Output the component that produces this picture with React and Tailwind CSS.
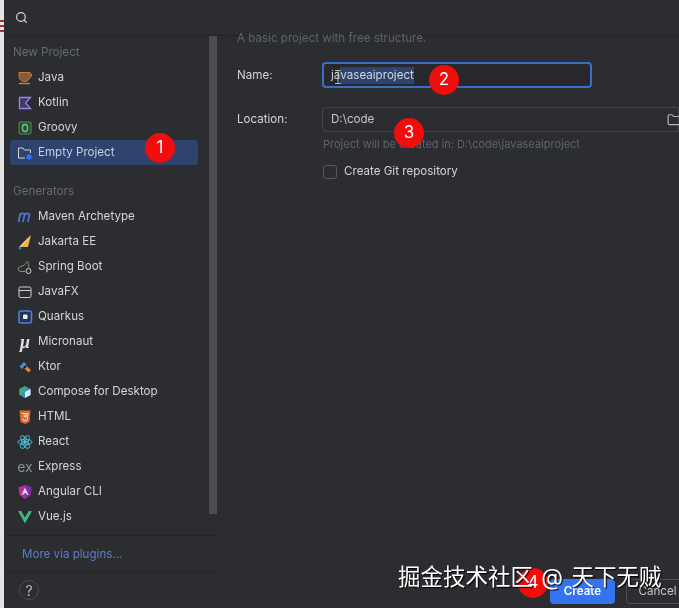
import { Search, Folder } from 'lucide-react';

const JavaIcon = () => (
  <svg viewBox="0 0 16 16" className="size-4" fill="none">
    <path d="M2 2.500h11v2.500c0 4-2 6.500-5.500 6.500S2 9 2 5z" fill="#8a5a34" stroke="#c77d3f" />
    <path d="M13 4h1.500v2.500L12.500 8" stroke="#c77d3f" />
    <path d="M2 13.500h11" stroke="#c77d3f" strokeWidth="1.500" />
  </svg>
);

const KotlinIcon = () => (
  <svg viewBox="0 0 16 16" className="size-4" fill="none">
    <path d="M2.500 2.500h11L8.500 8l5 5.500h-11z" fill="#3f3a63" stroke="#9a84e8" strokeWidth="1.300" />
  </svg>
);

const GroovyIcon = () => (
  <svg viewBox="0 0 16 16" className="size-4" fill="none">
    <rect x="2" y="2" width="12" height="12" rx="1" fill="#2f4a34" stroke="#4f8a57" />
    <rect x="5.500" y="4.500" width="5" height="7" rx="2.500" stroke="#7cc287" strokeWidth="1.300" />
  </svg>
);

const EmptyIcon = () => (
  <svg viewBox="0 0 16 16" className="size-4" fill="none">
    <path d="M1.500 13V3h4.500l1.500 2h6v3M1.500 13h6.500" stroke="#ced0d6" />
    <rect x="9.500" y="9.500" width="5" height="5" rx="1.500" fill="#3574f0" />
  </svg>
);

const MavenIcon = () => (
  <svg viewBox="0 0 16 16" className="size-4" fill="none" stroke="#4a78e0" strokeWidth="1.700">
    <path d="M1.500 13 3.500 4M3 6.500C4 4 7.500 3.500 7.500 6L6 13M7.500 6.500C8.500 4 12.500 3.500 12.300 6L11 13" />
  </svg>
);

const JakartaIcon = () => (
  <svg viewBox="0 0 16 16" className="size-4">
    <path d="M14 1 11 13 2 13z" fill="#f2b14a" />
    <path d="M14 1 7 10 2 13z" fill="#f8d88c" />
    <circle cx="3" cy="14" r="1.500" fill="#3574f0" />
  </svg>
);

const SpringIcon = () => (
  <svg viewBox="0 0 16 16" className="size-4" fill="none" stroke="#6f9a76">
    <path d="M8 12.500H4a2.500 2.500 0 0 1-.5-5C6 7 8 6 10.500 2.500 12 5 12 7 11.500 9" />
    <circle cx="11.500" cy="12" r="2.500" stroke="#ced0d6" />
  </svg>
);

const JavaFxIcon = () => (
  <svg viewBox="0 0 16 16" className="size-4" fill="none" stroke="#ced0d6">
    <rect x="2" y="3" width="12" height="10.500" rx="1.500" />
    <path d="M2 6.500h12" />
  </svg>
);

const QuarkusIcon = () => (
  <svg viewBox="0 0 16 16" className="size-4" fill="none">
    <rect x="2" y="2" width="12.500" height="12" rx="2" fill="#27334f" stroke="#4682e6" strokeWidth="1.500" />
    <rect x="6" y="5.500" width="4.500" height="4.500" rx="1" fill="#eef0f5" />
  </svg>
);

const MicronautIcon = () => (
  <span className="w-4 text-center font-['Liberation_Serif',serif] text-[18px] leading-4 font-semibold text-[#dfe1e5] italic">μ</span>
);

const KtorIcon = () => (
  <svg viewBox="0 0 16 16" className="size-4">
    <path d="M7 3 2.500 7.500 5 10l4.500-4.500z" fill="#3d8fe0" />
    <path d="M9.500 7 14 11l-2.500 2.500L7 9z" fill="#e8833a" />
    <circle cx="8" cy="8" r="1.300" fill="#1b1c1e" />
  </svg>
);

const ComposeIcon = () => (
  <svg viewBox="0 0 16 16" className="size-4">
    <path d="M8 2 13.500 5v6L8 14 2.500 11V5z" fill="#3b8fd6" />
    <path d="M8 2 2.500 5v6L8 8z" fill="#3fae6f" />
    <path d="M8 8v6l5.500-3V5z" fill="#dfe9f5" />
  </svg>
);

const HtmlIcon = () => (
  <svg viewBox="0 0 16 16" className="size-4">
    <path d="M2.500 1.500h11l-1 11.500L8 15l-4.500-2z" fill="#e0652f" />
    <path d="M5 4.500h6l-.2 1.800H7l.1 1.500h3.500L10.300 11 8 11.800 5.800 11l-.1-1.300" fill="none" stroke="#f8e3d6" />
  </svg>
);

const ReactIcon = () => (
  <svg viewBox="0 0 16 16" className="size-4" fill="none" stroke="#4fc3d9" strokeWidth="0.900">
    <ellipse cx="8" cy="8" rx="7" ry="2.800" />
    <ellipse cx="8" cy="8" rx="7" ry="2.800" transform="rotate(60 8 8)" />
    <ellipse cx="8" cy="8" rx="7" ry="2.800" transform="rotate(120 8 8)" />
    <circle cx="8" cy="8" r="1.400" fill="#4fc3d9" />
  </svg>
);

const ExpressIcon = () => (
  <span className="w-4 text-center text-[14px] leading-4 text-[#8c8f96]">ex</span>
);

const AngularIcon = () => (
  <svg viewBox="0 0 16 16" className="size-4">
    <path d="M8 1 14.500 3.500 13.500 11 8 15 2.500 11 1.500 3.500z" fill="#b52e9f" />
    <path d="M8 1v14l5.500-4 1-7.500z" fill="#7c2fa8" />
    <path d="M8 3.500 11.500 11H10l-.7-1.700H6.700L6 11H4.500z" fill="#f2d6ee" />
  </svg>
);

const VueIcon = () => (
  <svg viewBox="0 0 16 16" className="size-4">
    <path d="M1 2h3.200L8 8.500 11.800 2H15L8 14.500z" fill="#3fb984" />
  </svg>
);

// Only the top of this icon shows above the list's lower edge
const ClippedIcon = () => (
  <svg viewBox="0 0 16 16" className="size-4">
    <path d="M4 1h8l-1 6H5z" fill="#e8d44d" />
  </svg>
);

const topItems = [
  { name: 'Java', icon: JavaIcon },
  { name: 'Kotlin', icon: KotlinIcon },
  { name: 'Groovy', icon: GroovyIcon },
  { name: 'Empty Project', icon: EmptyIcon, selected: true },
];

const generators = [
  { name: 'Maven Archetype', icon: MavenIcon },
  { name: 'Jakarta EE', icon: JakartaIcon },
  { name: 'Spring Boot', icon: SpringIcon },
  { name: 'JavaFX', icon: JavaFxIcon },
  { name: 'Quarkus', icon: QuarkusIcon },
  { name: 'Micronaut', icon: MicronautIcon },
  { name: 'Ktor', icon: KtorIcon },
  { name: 'Compose for Desktop', icon: ComposeIcon },
  { name: 'HTML', icon: HtmlIcon },
  { name: 'React', icon: ReactIcon },
  { name: 'Express', icon: ExpressIcon },
  { name: 'Angular CLI', icon: AngularIcon },
  { name: 'Vue.js', icon: VueIcon },
  { name: '', icon: ClippedIcon },
];

function Row({ item }) {
  const Icon = item.icon;
  return (
    <div
      className={`flex h-[25px] shrink-0 items-center gap-[5px] rounded-[3px] pl-[7px] ${
        item.selected ? 'bg-[#2e436e]' : ''
      }`}
    >
      <Icon />
      <span className={item.selected ? 'text-[#c5cfe6]' : 'text-[#d3d5da]'}>{item.name}</span>
    </div>
  );
}

function Badge({ className, children }) {
  return (
    <div
      className={`absolute flex size-[30px] items-center justify-center rounded-full bg-[#f20d0d] text-[17px] text-white ${className}`}
    >
      {children}
    </div>
  );
}

export default function App() {
  return (
    <div className="relative flex h-[608px] w-[679px] overflow-hidden bg-[#2b2d30] font-['Inter','Noto_Sans_CJK_SC',sans-serif] text-[11.600px] blur-[0.4px]">
      {/* Window edge behind the dialog */}
      <div className="flex w-[4px] shrink-0 flex-col gap-[3px] bg-[#e4e4e4] pt-[20px]">
        <div className="h-[2px] bg-[#a5352c]" />
        <div className="h-[2px] bg-[#a5352c]" />
        <div className="h-[2px] bg-[#a5352c]" />
      </div>

      <div className="flex min-w-0 flex-1 flex-col">
        {/* Search */}
        <div className="flex h-[36px] shrink-0 items-center border-b border-[#232426] pl-[11px]">
          <Search size={13} strokeWidth={2.2} className="text-[#d3d5da]" />
        </div>

        <div className="flex min-h-0 flex-1">
          {/* Sidebar */}
          <div className="flex w-[214px] shrink-0 flex-col">
            <div className="flex min-h-0 flex-1">
              <div className="w-[205px] shrink-0 overflow-hidden pr-[11px] pl-[6px]">
                <div className="flex h-[29px] items-center pt-[4px] pl-[3px] text-[#666a70]">New Project</div>
                {topItems.map((item) => (
                  <Row key={item.name} item={item} />
                ))}
                <div className="mt-[14px] flex h-[25px] items-center pl-[3px] text-[#666a70]">Generators</div>
                {generators.map((item) => (
                  <Row key={item.name} item={item} />
                ))}
              </div>
              <div className="mb-[21px] w-[8px] shrink-0 bg-[#4b4d50]" />
            </div>
            <div className="flex h-[37px] shrink-0 items-center border-y border-[#232426] pt-[2px] pl-[18px] text-[#5a7fc7]">
              More via plugins...
            </div>
            <div className="flex h-[36px] shrink-0 items-center pl-[15px]">
              <div className="flex size-[20px] items-center justify-center rounded-full border border-[#4b4d50] text-[14px] text-[#b4b6bb]">
                ?
              </div>
            </div>
          </div>

          {/* Form */}
          <div className="flex min-w-0 flex-1 flex-col justify-between">
            <div className="pl-[19px]">
              <div className="mt-[-6px] text-[#5f6369]">A basic project with free structure.</div>
              <div className="mt-[15px] flex items-center">
                <label className="w-[85px] shrink-0 text-[#d3d5da]">Name:</label>
                <div className="flex h-[26px] w-[270px] items-center rounded-[4px] border-2 border-[#3a6fc9] bg-[#26282b] pl-[7px] text-[#d3d5da]">
                  <span>ja</span>
                  <span className="bg-[#2e436e]">vaseaiproject</span>
                </div>
              </div>
              <div className="mt-[19px] flex items-center">
                <label className="w-[85px] shrink-0 text-[#d3d5da]">Location:</label>
                <div className="flex h-[25px] flex-1 items-center justify-between rounded-l-[4px] border border-[#424448] pl-[8px] text-[#c4c6cb]">
                  <span>D:\code</span>
                  <Folder size={14} className="mr-[-3px] text-[#b4b6bb]" />
                </div>
              </div>
              <div className="mt-[4px] ml-[86px] text-[11px] text-[#5f6369]">
                Project will be created in: D:\code\javaseaiproject
              </div>
              <div className="mt-[10px] ml-[86px] flex items-center gap-[7px] text-[#d3d5da]">
                <div className="size-[14px] rounded-[3px] border border-[#55585c]" />
                Create Git repository
              </div>
            </div>

            <div className="mr-[-10px] mb-[4px] flex justify-end gap-[11px] font-semibold">
              <div className="flex h-[25px] w-[65px] items-center justify-center rounded-[4px] bg-[#3574f0] text-white">
                Create
              </div>
              <div className="flex h-[25px] w-[63px] items-center justify-center rounded-[4px] border border-[#4b4d50] font-normal text-[#c4c6cb]">
                Cancel
              </div>
            </div>
          </div>
        </div>
      </div>

      {/* I-beam pointer over the name field */}
      <svg viewBox="0 0 8 14" className="absolute top-[70px] left-[334px] h-[14px] w-[8px]" fill="none" stroke="#d3d5da" strokeWidth="0.800">
        <path d="M1 .5h6M1 13.500h6M4 .5v13" />
      </svg>

      <Badge className="top-[133px] left-[145px]">1</Badge>
      <Badge className="top-[65px] left-[429px]">2</Badge>
      <Badge className="top-[118px] left-[394px]">3</Badge>
      <Badge className="top-[568px] left-[518px]">4</Badge>

      {/* Watermark */}
      <div className="absolute top-[560px] left-[398px] text-[22.500px] whitespace-nowrap text-white [word-spacing:2px] [text-shadow:1px_1px_1px_#000]">
        掘金技术社区 @ 天下无贼
      </div>
    </div>
  );
}
